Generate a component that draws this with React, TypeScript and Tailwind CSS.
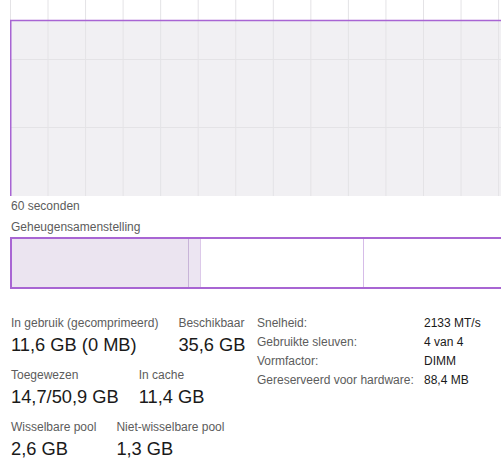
import React from "react";

const vLines = Array.from({ length: 13 }, (_, i) => 48 + i * 37.55);
const hLines = [59.5, 127.5];

const stats = [
  [
    { label: "In gebruik (gecomprimeerd)", value: "11,6 GB (0 MB)" },
    { label: "Beschikbaar", value: "35,6 GB" },
  ],
  [
    { label: "Toegewezen", value: "14,7/50,9 GB" },
    { label: "In cache", value: "11,4 GB" },
  ],
  [
    { label: "Wisselbare pool", value: "2,6 GB" },
    { label: "Niet-wisselbare pool", value: "1,3 GB" },
  ],
];

const details = [
  ["Snelheid:", "2133 MT/s"],
  ["Gebruikte sleuven:", "4 van 4"],
  ["Vormfactor:", "DIMM"],
  ["Gereserveerd voor hardware:", "88,4 MB"],
];

function UsageGraph() {
  return (
    <svg width="500" height="196" viewBox="0 0 500 196" className="block">
      <rect x="0" y="0" width="500" height="196" fill="#ffffff" />
      <rect x="0.5" y="20.5" width="500" height="175.5" fill="#f1f0f3" />
      {vLines.map((x) => (
        <line key={x} x1={x - 10} y1="0" x2={x - 10} y2="196" stroke="#e4e3e6" strokeWidth="1" />
      ))}
      {hLines.map((y) => (
        <line key={y} x1="0" y1={y} x2="500" y2={y} stroke="#e4e3e6" strokeWidth="1" />
      ))}
      <line x1="0.5" y1="0" x2="0.5" y2="20" stroke="#e4e3e6" strokeWidth="1" />
      <polyline points="0.75,196 0.75,20.5 500,20.5" fill="none" stroke="#a865d3" strokeWidth="1.5" />
    </svg>
  );
}

function CompositionBar() {
  return (
    <div className="overflow-hidden pl-[10px]">
      <div className="flex h-[52px] w-[600px] border-t-2 border-b-2 border-l-2 border-[#a865d3]">
        <div className="w-[177px] shrink-0 border-r border-[#c8b4d8] bg-[#ebe4f0]" />
        <div className="w-[12px] shrink-0 border-r border-[#dcc9e9] bg-[#ece5f2]" />
        <div className="w-[163px] shrink-0 border-r border-[#d6bce8]" />
        <div className="grow" />
      </div>
    </div>
  );
}

export default function App() {
  return (
    <div className="h-[466px] w-[501px] overflow-hidden bg-white font-['Liberation_Sans',Arial,sans-serif] text-[#1a1a1a]">
      <div className="pl-[10px]">
        <UsageGraph />
      </div>
      <div className="mt-[2px] pl-[11px] text-[12px] leading-[16px] text-[#5c5c5c]">60 seconden</div>
      <div className="mt-[5px] pl-[11px] text-[12px] leading-[16px] text-[#5c5c5c]">Geheugensamenstelling</div>
      <div className="mt-[2px]">
        <CompositionBar />
      </div>
      <div className="mt-[26px] flex pl-[11px]">
        <div className="flex w-[246px] shrink-0 flex-col gap-[10px]">
          {stats.map((row, i) => (
            <div key={i} className="flex gap-[20px]">
              {row.map((s) => (
                <div key={s.label} className="flex flex-col whitespace-nowrap">
                  <span className="text-[12px] leading-[16px] text-[#5c5c5c]">{s.label}</span>
                  <span className="mt-[2px] text-[18.3px] leading-[24px] text-[#1a1a1a]">{s.value}</span>
                </div>
              ))}
            </div>
          ))}
        </div>
        <div className="grid h-fit grid-cols-[167px_auto] gap-y-[3px] whitespace-nowrap text-[12px] leading-[16px]">
          {details.map(([k, v]) => (
            <React.Fragment key={k}>
              <span className="text-[#5c5c5c]">{k}</span>
              <span className="text-[#1a1a1a]">{v}</span>
            </React.Fragment>
          ))}
        </div>
      </div>
    </div>
  );
}
